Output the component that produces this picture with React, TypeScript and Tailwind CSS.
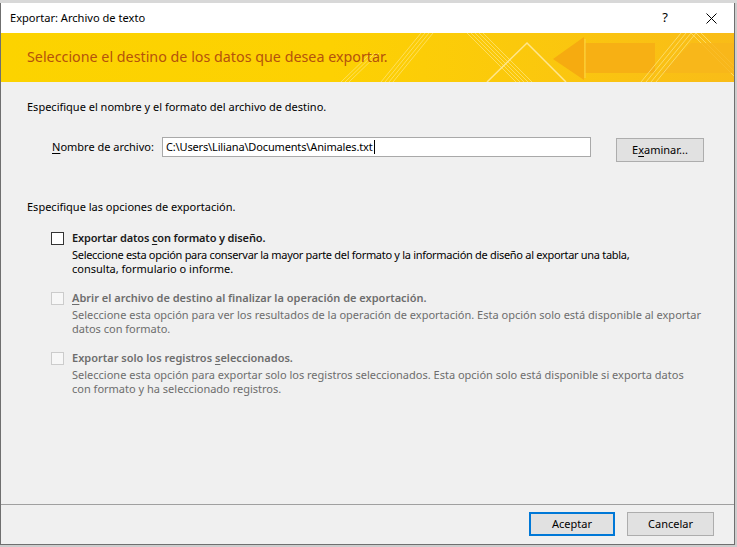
import React from "react";

const font = { fontFamily: '"Noto Sans", "Open Sans", Arial, sans-serif' };

function Banner() {
  return (
    <div className="relative h-[49px] w-full overflow-hidden">
      <svg width="733" height="49" viewBox="0 0 733 49" className="absolute inset-0">
        <defs>
          <linearGradient id="bg" x1="0" y1="0" x2="1" y2="0">
            <stop offset="0" stopColor="#fcd300" />
            <stop offset="0.45" stopColor="#fdd102" />
            <stop offset="0.7" stopColor="#fbc90c" />
            <stop offset="1" stopColor="#f9bc18" />
          </linearGradient>
        </defs>
        <rect width="733" height="49" fill="url(#bg)" />
        <g stroke="#ffe680" strokeWidth="1" opacity="0.7">
          <line x1="340" y1="49" x2="370" y2="20" />
          <line x1="344" y1="49" x2="374" y2="20" />
          <line x1="348" y1="49" x2="378" y2="20" />
          <line x1="380" y1="49" x2="420" y2="0" />
          <line x1="384" y1="49" x2="424" y2="0" />
          <line x1="388" y1="49" x2="428" y2="0" />
          <line x1="392" y1="49" x2="432" y2="0" />
          <line x1="466" y1="0" x2="515" y2="49" />
          <line x1="470" y1="0" x2="519" y2="49" />
          <line x1="474" y1="0" x2="523" y2="49" />
          <line x1="478" y1="0" x2="527" y2="49" />
          <line x1="482" y1="0" x2="531" y2="49" />
          <line x1="690" y1="0" x2="733" y2="43" />
          <line x1="695" y1="0" x2="733" y2="38" />
          <line x1="700" y1="0" x2="733" y2="33" />
        </g>
        <g stroke="#ffe99a" strokeWidth="1.5" opacity="0.9" fill="none">
          <polyline points="486,49 526,10 565,49" />
        </g>
        <polygon points="552,26 583,4 583,47" fill="#f6ab10" />
        <rect x="584" y="10" width="70" height="30" fill="#f7b014" />
        <line x1="584" y1="6" x2="584" y2="45" stroke="#fcd34a" strokeWidth="1" />
        <polygon points="660,40 690,10 733,10 733,40" fill="#f8b51c" opacity="0.8" />
        <g stroke="#fde27a" strokeWidth="1" opacity="0.8">
          <line x1="640" y1="49" x2="680" y2="0" />
          <line x1="645" y1="49" x2="685" y2="0" />
          <line x1="650" y1="49" x2="690" y2="0" />
          <line x1="655" y1="49" x2="695" y2="0" />
        </g>
      </svg>
      <div className="relative flex h-full items-center pl-[26px] pb-[1px] text-[14.3px] text-[#b5530c] whitespace-nowrap">
        Seleccione el destino de los datos que desea exportar.
      </div>
    </div>
  );
}

function Check({ disabled }: { disabled?: boolean }) {
  return (
    <div
      className={
        "mt-[2px] h-[13px] w-[13px] shrink-0 border " +
        (disabled ? "border-[#cccccc] bg-[#f7f7f7]" : "border-[#333333] bg-white")
      }
    />
  );
}

function Option({
  disabled,
  label,
  lines,
  first,
}: {
  disabled?: boolean;
  label: React.ReactNode;
  lines: string[];
  first?: boolean;
}) {
  return (
    <div className="flex gap-[8px] pl-[50px]">
      <Check disabled={disabled} />
      <div className="flex flex-col whitespace-nowrap">
        <div
          className={
            "h-[16px] leading-[16px] font-semibold " +
            (disabled ? "text-[#6d6d6d]" : "text-[#1a1a1a] tracking-[-0.15px]")
          }
        >
          {label}
        </div>
        <div className={"mt-[2px] leading-[14px] " + (disabled ? "text-[#6d6d6d]" : "text-black")}>
          {lines.map((l, i) => (
            <div key={i} className={first && i === 0 ? "tracking-[-0.3px]" : ""}>
              {l}
            </div>
          ))}
        </div>
      </div>
    </div>
  );
}

export default function App() {
  return (
    <div className="h-[547px] w-[737px] overflow-hidden bg-[#cdcdcd] text-[11px]" style={font}>
      <div className="h-[3px] bg-[#d8d8d8]" />
      <div className="flex h-[542px] w-[735px] flex-col border-x border-b border-[#6f6f6f] bg-[#f0f0f0]">
        <div className="flex h-[30px] items-center bg-white pl-[9px] text-black">
          <span className="flex-1 text-[11.1px]">Exportar: Archivo de texto</span>
          <span className="w-[20px] text-center text-[13px]">?</span>
          <div className="ml-[26px] mr-[13px] flex w-[20px] justify-center">
            <svg width="11" height="11" viewBox="0 0 11 11">
              <path d="M0.5 0.5 L10.5 10.5 M10.5 0.5 L0.5 10.5" stroke="#000" strokeWidth="1" />
            </svg>
          </div>
        </div>
        <Banner />
        <div className="flex flex-1 flex-col text-black">
          <div className="mt-[17px] pl-[26px] leading-[16px]">
            Especifique el nombre y el formato del archivo de destino.
          </div>
          <div className="mt-[22px] flex items-start">
            <div className="w-[161px] whitespace-nowrap pl-[51px] pt-[1px] leading-[18px]">
              <span className="underline underline-offset-2">N</span>ombre de archivo:
            </div>
            <div className="flex h-[20px] w-[429px] items-center border border-[#a9a9a9] bg-white pl-[3px] leading-[16px] whitespace-nowrap tracking-[-0.15px]">
              C:\Users\Liliana\Documents\Animales.txt
              <span className="ml-[1px] inline-block h-[14px] w-[1px] bg-black" />
            </div>
            <div className="ml-[25px] mt-[1px] flex h-[24px] w-[88px] items-center justify-center border border-[#adadad] bg-[#e1e1e1]">
              E<span className="underline underline-offset-2">x</span>aminar...
            </div>
          </div>
          <div className="mt-[37px] pl-[26px] leading-[16px]">
            Especifique las opciones de exportación.
          </div>
          <div className="mt-[15px] flex flex-col gap-[14px]">
            <Option
              first
              label={
                <>
                  Exportar datos <span className="underline underline-offset-2">c</span>on formato y diseño.
                </>
              }
              lines={[
                "Seleccione esta opción para conservar la mayor parte del formato y la información de diseño al exportar una tabla,",
                "consulta, formulario o informe.",
              ]}
            />
            <Option
              disabled
              label={
                <>
                  <span className="underline underline-offset-2">A</span>brir el archivo de destino al finalizar la operación de exportación.
                </>
              }
              lines={[
                "Seleccione esta opción para ver los resultados de la operación de exportación. Esta opción solo está disponible al exportar",
                "datos con formato.",
              ]}
            />
            <Option
              disabled
              label={
                <>
                  Exportar solo los registros <span className="underline underline-offset-2">s</span>eleccionados.
                </>
              }
              lines={[
                "Seleccione esta opción para exportar solo los registros seleccionados. Esta opción solo está disponible si exporta datos",
                "con formato y ha seleccionado registros.",
              ]}
            />
          </div>
          <div className="flex-1" />
          <div className="border-t border-[#a0a0a0] pt-[7px] pb-[8px]">
            <div className="flex justify-end gap-[12px] pr-[20px]">
              <div className="flex h-[24px] w-[86px] items-center justify-center border-2 border-[#0078d7] bg-[#e1e1e1]">
                Aceptar
              </div>
              <div className="flex h-[24px] w-[87px] items-center justify-center border border-[#adadad] bg-[#e1e1e1]">
                Cancelar
              </div>
            </div>
          </div>
        </div>
      </div>
    </div>
  );
}
